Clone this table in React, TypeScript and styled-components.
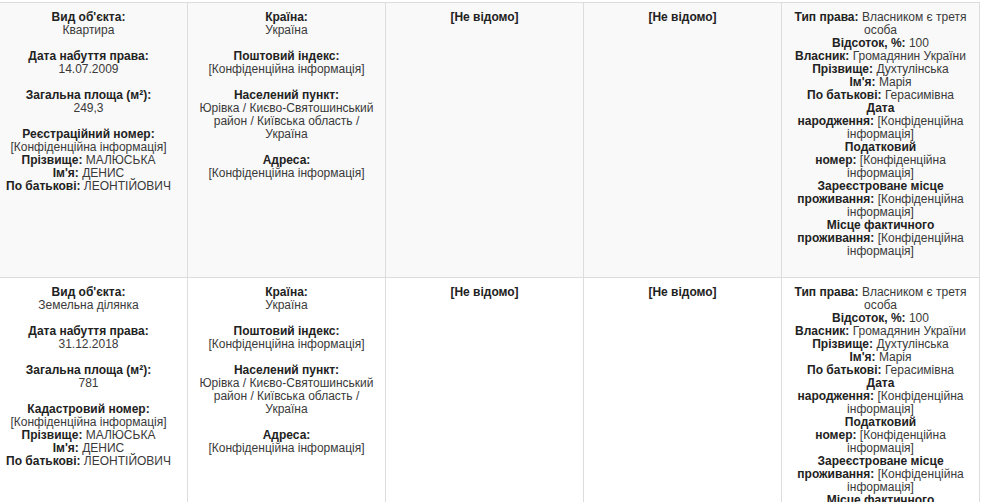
import styled, { createGlobalStyle } from 'styled-components';

const GlobalStyle = createGlobalStyle`
  body {
    margin: 0;
    background: #fff;
    font-family: "Liberation Sans", Arial, sans-serif;
    font-size: 12px;
    color: #333;
    overflow: hidden;
  }
`;

const Page = styled.div`
  padding-top: 2px;
  margin-left: -11px;
`;

const Table = styled.table`
  width: 990px;
  table-layout: fixed;
  border-collapse: collapse;
`;

const Row = styled.tr<{ $striped?: boolean }>`
  background: ${(p) => (p.$striped ? '#f9f9f9' : '#fff')};
`;

const Cell = styled.td`
  width: 181px;
  border: 1px solid #ddd;
  padding: 8px 8px 19px;
  vertical-align: top;
  text-align: center;
  line-height: 13px;
`;

const Label = styled.b`
  font-weight: bold;
  color: #222;
`;

const Value = styled.span`
  color: #3a3a3a;
`;

const Block = styled.div`
  &:not(:last-child) {
    margin-bottom: 13px;
  }
`;

const Line = styled.div``;

const CONF = '[Конфіденційна інформація]';

type Field = { label: string; value: string };

function StackedField({ label, value }: Field) {
  return (
    <>
      <Label>{label}</Label>
      <br />
      <Value>{value}</Value>
    </>
  );
}

function InlineField({ label, value }: Field) {
  // label and value are glued by a no-break space, as on the source site
  return (
    <Line>
      <Label>{label}</Label>
      {'\u00a0'}
      <Value>{value}</Value>
    </Line>
  );
}

type Property = {
  kind: string;
  date: string;
  area: string;
  numberLabel: string;
};

const properties: Property[] = [
  { kind: 'Квартира', date: '14.07.2009', area: '249,3', numberLabel: 'Реєстраційний номер:' },
  { kind: 'Земельна ділянка', date: '31.12.2018', area: '781', numberLabel: 'Кадастровий номер:' },
];

const ownerFields: Field[] = [
  { label: 'Тип права:', value: 'Власником є третя особа' },
  { label: 'Відсоток, %:', value: '100' },
  { label: 'Власник:', value: 'Громадянин України' },
  { label: 'Прізвище:', value: 'Духтулінська' },
  { label: "Ім'я:", value: 'Марія' },
  { label: 'По батькові:', value: 'Герасимівна' },
  { label: 'Дата народження:', value: CONF },
  { label: 'Податковий номер:', value: CONF },
  { label: 'Зареєстроване місце проживання:', value: CONF },
  { label: 'Місце фактичного проживання:', value: CONF },
];

function PropertyRow({ item, striped }: { item: Property; striped?: boolean }) {
  return (
    <Row $striped={striped}>
      <Cell>
        <Block>
          <StackedField label="Вид об'єкта:" value={item.kind} />
        </Block>
        <Block>
          <StackedField label="Дата набуття права:" value={item.date} />
        </Block>
        <Block>
          <StackedField label="Загальна площа (м²):" value={item.area} />
        </Block>
        <Block>
          <StackedField label={item.numberLabel} value={CONF} />
          <InlineField label="Прізвище:" value="МАЛЮСЬКА" />
          <InlineField label="Ім'я:" value="ДЕНИС" />
          <InlineField label="По батькові:" value="ЛЕОНТІЙОВИЧ" />
        </Block>
      </Cell>
      <Cell>
        <Block>
          <StackedField label="Країна:" value="Україна" />
        </Block>
        <Block>
          <StackedField label="Поштовий індекс:" value={CONF} />
        </Block>
        <Block>
          <StackedField
            label="Населений пункт:"
            value="Юрівка / Києво-Святошинський район / Київська область / Україна"
          />
        </Block>
        <Block>
          <StackedField label="Адреса:" value={CONF} />
        </Block>
      </Cell>
      <Cell>
        <Label>[Не відомо]</Label>
      </Cell>
      <Cell>
        <Label>[Не відомо]</Label>
      </Cell>
      <Cell>
        {ownerFields.map((f) => (
          <InlineField key={f.label} label={f.label} value={f.value} />
        ))}
      </Cell>
    </Row>
  );
}

export default function App() {
  return (
    <Page>
      <GlobalStyle />
      <Table>
        <tbody>
          {properties.map((p, i) => (
            <PropertyRow key={p.kind} item={p} striped={i === 0} />
          ))}
        </tbody>
      </Table>
    </Page>
  );
}
